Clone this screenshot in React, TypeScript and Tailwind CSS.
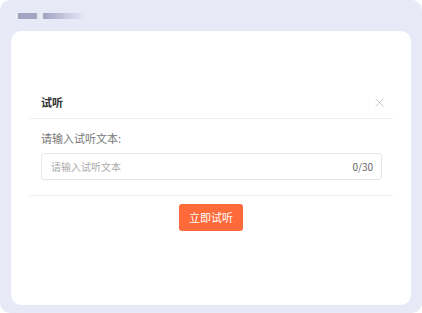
import React, { useState } from "react";

const font = { fontFamily: '"Noto Sans CJK SC", "Noto Sans", sans-serif' };

const App: React.FC = () => {
  const [text, setText] = useState("");

  return (
    <div className="w-[422px] h-[313px] bg-white" style={font}>
      <div className="w-full h-full bg-[#e8e9f7] rounded-[10px] flex flex-col">
        {/* top bars */}
        <div className="flex gap-[6px] pt-[13px] pl-[18px]">
          <div className="w-[19px] h-[6px] bg-[#a2a5c2]" />
          <div className="w-[43px] h-[6px] bg-gradient-to-r from-[#a2a5c2] to-[#e8e9f7]" />
        </div>

        {/* card */}
        <div className="mt-[12px] mx-[11px] h-[274px] bg-white rounded-[10px] pt-[55px] px-[18px]">
          {/* header */}
          <div className="h-[33px] flex items-center justify-between pl-[12px] pr-[9px] border-b border-[#f0f0f0]">
            <span className="text-[11px] font-bold text-[#333]">试听</span>
            <svg width="9" height="9" viewBox="0 0 9 9" className="text-[#cccccc]">
              <path d="M0.5 0.5L8.5 8.5M8.5 0.5L0.5 8.5" stroke="currentColor" strokeWidth="1" />
            </svg>
          </div>

          {/* body */}
          <div className="pt-[12px] pb-[15px] pl-[12px] pr-[11px] border-b border-[#f0f0f0]">
            <div className="text-[11px] leading-[15px] text-[#777]">请输入试听文本:</div>
            <div className="mt-[7px] h-[27px] flex items-center border border-[#e6e6e6] rounded-[3px] pl-[9px] pr-[8px]">
              <input
                value={text}
                onChange={(e) => setText(e.target.value.slice(0, 30))}
                placeholder="请输入试听文本"
                className="flex-1 min-w-0 outline-none text-[10px] text-[#333] placeholder:text-[#aaa] bg-transparent"
              />
              <span className="text-[10px] text-[#666]">{text.length}/30</span>
            </div>
          </div>

          {/* footer */}
          <div className="flex justify-center pt-[8px]">
            <button className="w-[64px] h-[27px] bg-[#ff6a3b] text-white text-[11px] rounded-[3px]">
              立即试听
            </button>
          </div>
        </div>
      </div>
    </div>
  );
};

export default App;
